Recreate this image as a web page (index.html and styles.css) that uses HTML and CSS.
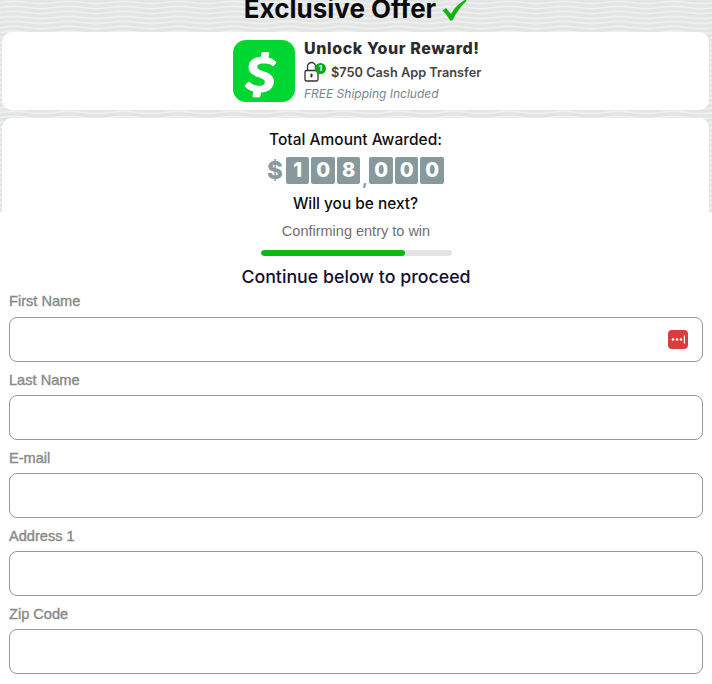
FILE: index.html
```html
<!DOCTYPE html>
<html lang="en">
<head>
<meta charset="utf-8">
<title>Exclusive Offer</title>
<link rel="stylesheet" href="styles.css">
</head>
<body>
<div class="page">
  <section class="hero">
    <h1 class="title">Exclusive Offer
      <svg class="check" viewBox="0 0 26 22" width="26" height="22" aria-hidden="true"><path d="M1.500 11.500 L5 9 L10 15 C13 9.500 18 4 24.500 0.500 L25.500 2 C19.500 7.500 15 14 11.500 21.500 L9 21.500 C7 17.500 4.500 14.500 1.500 11.500 Z" fill="#12b30f"/></svg>
    </h1>
    <div class="card reward">
      <div class="logo">
        <svg viewBox="0 0 62 62" width="62" height="62" aria-hidden="true"><path d="M32.500 23.500c3 0 5.700 1.200 7.700 3l2.600-2.900c.6-.6.600-1.500 0-2.100-2-1.800-4.600-3.200-7.400-3.900l.9-3.900c.2-.9-.5-1.700-1.400-1.700h-5c-.7 0-1.200.5-1.400 1.100l-.8 3.600c-6.600.4-12.100 3.700-12.100 10.400 0 5.800 4.500 8.300 9.300 10 4.500 1.700 6.900 2.400 6.900 4.800 0 2.500-2.400 3.900-5.800 3.900-3.200 0-6.500-1.100-9-3.600-.6-.6-1.500-.6-2.100 0l-2.800 2.800c-.6.600-.6 1.500 0 2.100 2.200 2.200 5.100 3.700 8.300 4.600l-.9 3.900c-.2.900.5 1.700 1.400 1.700l5 .1c.7 0 1.300-.5 1.400-1.100l.9-3.900c7.900-.5 12.700-4.800 12.700-11 0-5.700-4.700-8.100-10.500-10.100-3.300-1.200-6.100-2-6.100-4.500 0-2.400 2.700-3.400 5.200-3.400z" fill="#fff"/></svg>
      </div>
      <div class="reward-text">
        <h2 class="reward-title">Unlock Your Reward!</h2>
        <div class="reward-line">
          <span class="lock">
            <svg viewBox="0 0 16 22" width="16" height="22" aria-hidden="true"><path d="M3.500 10V5.500a4 4 0 0 1 8 0V10" fill="none" stroke="#333" stroke-width="1.300"/><rect x="1" y="9.500" width="13" height="10.500" rx="1.500" fill="#fff" stroke="#333" stroke-width="1.300"/><rect x="6.500" y="12.500" width="2" height="4" rx="1" fill="#333"/></svg>
            <span class="lock-badge">1</span>
          </span>
          <span class="reward-amount">$750 Cash App Transfer</span>
        </div>
        <div class="reward-note">FREE Shipping Included</div>
      </div>
    </div>
    <div class="card total">
      <div class="total-label">Total Amount Awarded:</div>
      <div class="counter">
        <span class="dollar">$</span>
        <span class="digit">1</span><span class="digit">0</span><span class="digit">8</span>
        <span class="comma">,</span>
        <span class="digit">0</span><span class="digit">0</span><span class="digit">0</span>
      </div>
      <div class="next">Will you be next?</div>
    </div>
  </section>
  <section class="status">
    <div class="confirming">Confirming entry to win</div>
    <div class="progress"><div class="progress-fill"></div></div>
    <div class="continue">Continue below to proceed</div>
  </section>
  <form class="form">
    <div class="field">
      <label class="label" for="first">First Name</label>
      <div class="input-wrap">
        <input class="input" id="first" type="text">
        <span class="pw-icon">
          <svg viewBox="0 0 20 19" width="20" height="19" aria-hidden="true"><circle cx="5" cy="9.500" r="1.300" fill="#fff"/><circle cx="9" cy="9.500" r="1.300" fill="#fff"/><circle cx="13" cy="9.500" r="1.300" fill="#fff"/><rect x="15.800" y="5.500" width="1.200" height="8" fill="#fff"/></svg>
        </span>
      </div>
    </div>
    <div class="field"><label class="label" for="last">Last Name</label><input class="input" id="last" type="text"></div>
    <div class="field"><label class="label" for="email">E-mail</label><input class="input" id="email" type="text"></div>
    <div class="field"><label class="label" for="addr">Address 1</label><input class="input" id="addr" type="text"></div>
    <div class="field"><label class="label" for="zip">Zip Code</label><input class="input" id="zip" type="text"></div>
  </form>
</div>
</body>
</html>
```
FILE: styles.css
```css
* { box-sizing: border-box; }
html, body { margin: 0; padding: 0; height: 100%; overflow: hidden; background: #fff; }
body { font-family: Inter, "Liberation Sans", sans-serif; }
.page { width: 712px; height: 684px; overflow: hidden; }

.hero {
  height: 212px;
  padding: 0 3px 0 2px;
  overflow: hidden;
  background-color: #e3e5e5;
  background-image: url("data:image/svg+xml,%3Csvg xmlns='http://www.w3.org/2000/svg' width='110' height='5'%3E%3Cg fill='none' stroke='%23eff1f1' stroke-width='1.500'%3E%3Cpath d='M0 -7.500C28 -12 27 -3 55 -7.500S82 -3 110 -7.500'/%3E%3Cpath d='M0 -2.500C28 -7 27 2 55 -2.500S82 2 110 -2.500'/%3E%3Cpath d='M0 2.500C28 -2 27 7 55 2.500S82 7 110 2.500'/%3E%3Cpath d='M0 7.500C28 3 27 12 55 7.500S82 12 110 7.500'/%3E%3Cpath d='M0 12.500C28 8 27 17 55 12.500S82 17 110 12.500'/%3E%3C/g%3E%3C/svg%3E");
}
.title {
  height: 32px;
  margin: -7px 0 7px;
  display: flex;
  justify-content: center;
  align-items: center;
  gap: 5px;
  font-size: 26px;
  line-height: 32px;
  font-weight: 700;
  color: #0b0b0b;
}
.check { margin-top: 2px; }
.card { background: #fff; border-radius: 10px; }
.reward {
  height: 78px;
  display: flex;
  justify-content: center;
  align-items: center;
  gap: 9px;
  padding-left: 4px;
}
.logo {
  width: 62px;
  height: 62px;
  border-radius: 13px;
  background: #00d632;
  flex: none;
}
.logo svg { display: block; }
.reward-text { width: 178px; }
.reward-title {
  margin: -2px 0 0;
  font-size: 16px;
  line-height: 18px;
  font-weight: 800;
  letter-spacing: 0.600px;
  color: #2c2c2e;
  white-space: nowrap;
}
.reward-line { display: flex; align-items: center; gap: 6px; height: 24px; margin-top: 3px; }
.lock { position: relative; display: block; width: 21px; height: 22px; }
.lock svg { display: block; }
.lock-badge {
  position: absolute;
  top: 2px;
  right: -1px;
  width: 11px;
  height: 11px;
  border-radius: 50%;
  background: #12a51a;
  color: #fff;
  font-size: 8px;
  line-height: 11px;
  font-weight: 700;
  text-align: center;
}
.reward-amount { font-size: 12.750px; font-weight: 600; color: #444; white-space: nowrap; }
.reward-note { margin-top: 2px; font-size: 12px; line-height: 15px; font-style: italic; color: #75858c; white-space: nowrap; }

.total { margin-top: 8px; height: 110px; padding-top: 13px; text-align: center; }
.total-label { font-size: 15.500px; line-height: 18px; font-weight: 500; color: #111; }
.counter { display: flex; justify-content: center; align-items: center; height: 27px; margin-top: 8px; gap: 2px; }
.dollar { font-size: 24px; font-weight: 800; color: #8a9a9e; margin-right: 1px; }
.digit {
  width: 23.500px;
  height: 27px;
  border-radius: 2px;
  background: #87999d;
  color: #fff;
  font-size: 20px;
  line-height: 27px;
  font-weight: 800;
}
.comma { width: 7px; align-self: flex-end; font-size: 15px; line-height: 15px; font-weight: 800; color: #87999d; margin: 0 -1px -3px; }
.next { margin-top: 11px; font-size: 15.400px; line-height: 18px; font-weight: 500; color: #0d0d0d; }

.status { text-align: center; height: 82px; padding-top: 10px; }
.confirming { font-family: "Liberation Sans", sans-serif; font-size: 14.500px; line-height: 18px; color: #6f6f6f; }
.progress { width: 191px; height: 6px; margin: 10px auto 0 261px; border-radius: 3px; background: #e3e3e3; overflow: hidden; }
.progress-fill { width: 75.500%; height: 100%; border-radius: 3px; background: #10b815; }
.continue { margin-top: 9px; font-size: 17.800px; line-height: 24px; font-weight: 500; color: #14102e; }

.form { padding: 0 9px; }
.field { display: flex; flex-direction: column; }
.label {
  height: 33px;
  padding-top: 11px;
  font-family: "Liberation Sans", Arial, sans-serif;
  font-size: 14.600px;
  line-height: 15px;
  font-weight: 400;
  color: #8a8a8a;
  -webkit-text-stroke: 0.400px #8a8a8a;
}
.field:first-child .label { height: 23px; padding-top: 0; }
.input-wrap { position: relative; }
.input {
  display: block;
  width: 100%;
  height: 45px;
  border: 1px solid #989898;
  border-radius: 8px;
  background: #fff;
  outline: none;
  padding: 0 12px;
}
.pw-icon {
  position: absolute;
  top: 13px;
  right: 15px;
  width: 20px;
  height: 19px;
  border-radius: 4px;
  background: #db3d3d;
}
.pw-icon svg { display: block; }
```
